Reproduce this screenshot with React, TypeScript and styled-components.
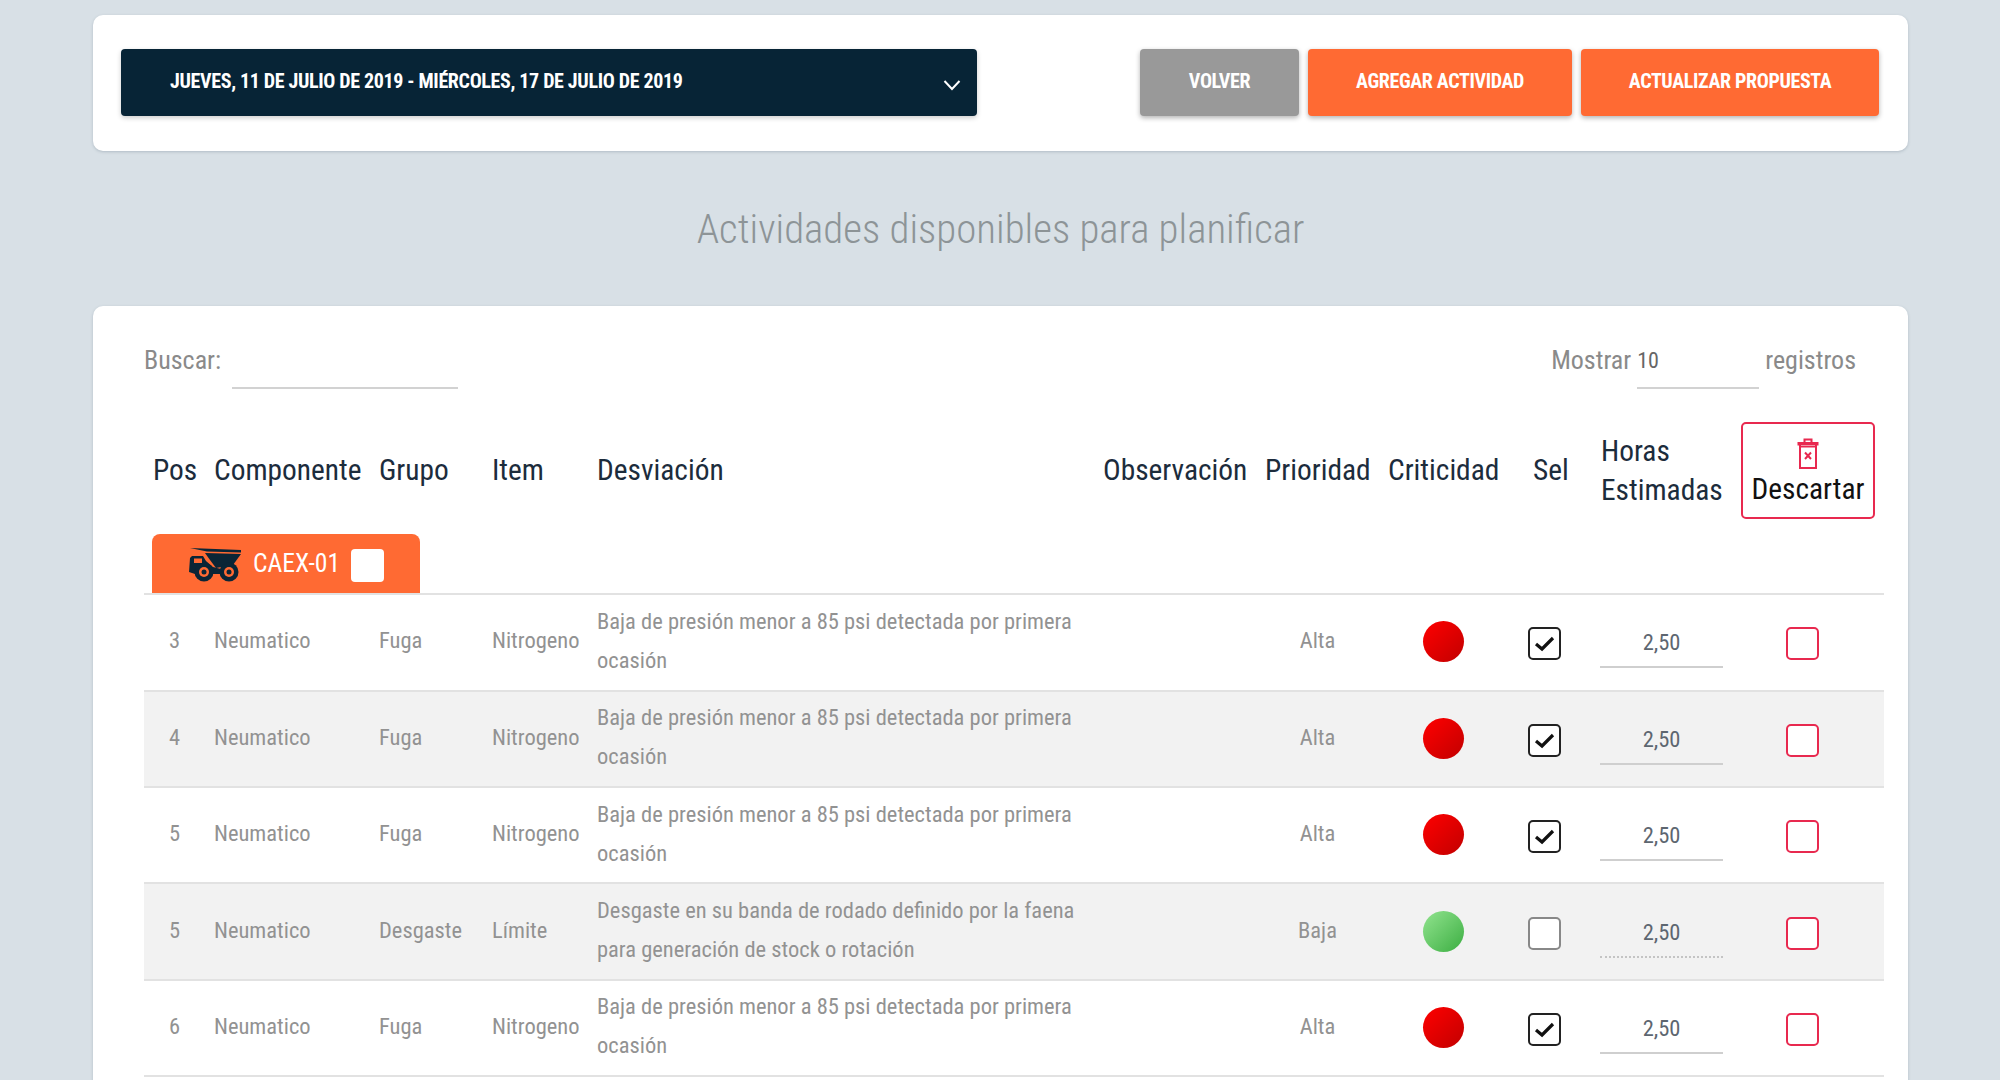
import React from 'react';
import styled, { createGlobalStyle } from 'styled-components';

const GlobalStyle = createGlobalStyle`
    html, body {
        margin: 0;
        height: 100%;
        overflow: hidden;
        background: #d8e0e6;
        font-family: "Roboto Condensed", "Liberation Sans Narrow", Roboto, sans-serif;
        font-stretch: condensed;
    }
    * { box-sizing: border-box; }
`;

const COLS = '61px 165px 113px 105px 506px 162px 123px 129px 84px 149px 143px';

const Page = styled.div`
    padding: 15px 92px 0 93px;
`;

const Card = styled.section`
    background: #fff;
    border-radius: 10px;
    box-shadow: 0 1px 3px rgba(60, 80, 100, 0.25);
`;

const TopBar = styled(Card)`
    height: 136px;
    padding: 34px 29px 0 28px;
    display: flex;
    gap: 9px;
`;

const DateSelect = styled.div`
    width: 856px;
    height: 67px;
    margin-right: 154px;
    padding: 0 15px 4px 49px;
    display: flex;
    align-items: center;
    justify-content: space-between;
    background: #072436;
    color: #fff;
    border-radius: 4px;
    font-size: 20px;
    font-weight: 700;
    letter-spacing: -0.34px;
    box-shadow: 0 2px 5px rgba(0, 0, 0, 0.2);
`;

const ChevronSvg = styled.svg`
    margin-top: 8px;
`;

const ActionButton = styled.button<{ $width: number; $gray?: boolean }>`
    width: ${p => p.$width}px;
    height: 67px;
    padding: 0 0 4px;
    border: 0;
    border-radius: 4px;
    background: ${p => (p.$gray ? '#999' : '#ff6a33')};
    color: #fff;
    font: inherit;
    font-size: 20px;
    font-weight: 700;
    letter-spacing: -0.36px;
    box-shadow: 0 2px 5px rgba(0, 0, 0, 0.3);
`;

const Title = styled.h2`
    height: 155px;
    margin: 0;
    display: flex;
    align-items: center;
    justify-content: center;
    color: #8d9497;
    font-size: 40.9px;
    font-weight: 300;
`;

const TableCard = styled(Card)`
    height: 900px;
    padding: 34px 24px 0 51px;
`;

const Filters = styled.div`
    height: 49px;
    padding-right: 28px;
    display: flex;
    align-items: flex-start;
    color: #8a8a8a;
    font-size: 26px;
`;

const FilterLabel = styled.span<{ $left?: number }>`
    margin-left: ${p => p.$left || 0}px;
    line-height: 40px;
`;

const UnderInput = styled.input<{ $width: number; $left: number }>`
    width: ${p => p.$width}px;
    height: 49px;
    margin-left: ${p => p.$left}px;
    padding: 0 0 7px;
    border: 0;
    border-bottom: 2px solid #d2d2d2;
    outline: none;
    background: none;
    color: #666;
    font: inherit;
    font-size: 22px;
`;

const Spacer = styled.div`
    flex: 1;
`;

const HeadRow = styled.div`
    height: 97px;
    margin-top: 33px;
    display: grid;
    grid-template-columns: ${COLS};
    align-items: center;
    color: #1c2c3c;
    font-size: 29.4px;
    line-height: 39px;
`;

const HeadCell = styled.div<{ $indent?: number }>`
    padding: 0 9px 0 ${p => p.$indent || 9}px;
`;

const DiscardBox = styled.div`
    width: 134px;
    height: 97px;
    padding-top: 14px;
    display: flex;
    flex-direction: column;
    align-items: center;
    border: 2px solid #e8294f;
    border-radius: 5px;
    color: #111;
`;

const GroupRow = styled.div`
    height: 76.2px;
    padding: 15px 0 0 8px;
    border-bottom: 2px solid #e2e2e2;
`;

const GroupTab = styled.div`
    width: 268px;
    height: 59px;
    padding: 14px 0 0 37px;
    display: flex;
    align-items: flex-start;
    gap: 10px;
    background: #ff6a33;
    border-radius: 8px 8px 0 0;
    color: #fff;
    font-size: 25.6px;
    line-height: 31px;
`;

const GroupCheck = styled.span`
    width: 33px;
    height: 33px;
    margin: 1px 0 0 1px;
    background: #fff;
    border-radius: 4px;
`;

const Row = styled.div<{ $alt: boolean }>`
    height: 96.4px;
    display: grid;
    grid-template-columns: ${COLS};
    align-items: center;
    background: ${p => (p.$alt ? '#f2f2f2' : '#fff')};
    border-bottom: 2px solid #e2e2e2;
    color: #929292;
    font-size: 22.5px;
    line-height: 39px;
`;

const Cell = styled.div<{ $center?: boolean }>`
    padding: 0 9px;
    margin-top: -3px;
    text-align: ${p => (p.$center ? 'center' : 'left')};
`;

const Dot = styled.span<{ $ok: boolean }>`
    display: block;
    width: 41px;
    height: 41px;
    margin: 2px auto 0;
    border-radius: 50%;
    background: ${p =>
        p.$ok
            ? 'linear-gradient(135deg, #92e48f, #3cae42)'
            : 'linear-gradient(135deg, #ff0000, #c20000)'};
`;

const Check = styled.span<{ $on?: boolean; $danger?: boolean; $left: number }>`
    display: flex;
    align-items: center;
    justify-content: center;
    width: 33px;
    height: 33px;
    margin: 3px 0 0 ${p => p.$left}px;
    background: #fff;
    border-radius: 5px;
    border: 2px solid ${p => (p.$danger ? '#e8294f' : p.$on ? '#222' : '#888')};
`;

const HoursInput = styled.input<{ $off: boolean }>`
    display: block;
    width: 123px;
    height: 44px;
    margin: 8px 0 0 8px;
    padding: 0 0 6px;
    border: 0;
    border-bottom: 2px ${p => (p.$off ? 'dotted #c4c4c4' : 'solid #cfcfcf')};
    background: none;
    outline: none;
    text-align: center;
    color: #5d6670;
    font: inherit;
    font-size: 22.5px;
`;

const TruckIcon = () => (
    <svg width="54" height="34" viewBox="0 0 54 34" fill="#0b2536">
        <path d="M1 0 L52 2 V4.5 L18 3.4 Z" />
        <path d="M16 5 L52 6 L44 17 L27 20 L21 12 Z" />
        <path d="M1 10 L3 8 H14 L17 13 L24 19 L32 21 V26 H6 L0 24 Z" />
        <rect x="5" y="10.5" width="8" height="4.5" fill="#ff6a33" />
        <circle cx="15" cy="24" r="9.5" />
        <circle cx="15" cy="24" r="5" fill="#ff6a33" />
        <circle cx="15" cy="24" r="2.5" />
        <circle cx="40" cy="24" r="9.5" />
        <circle cx="40" cy="24" r="5" fill="#ff6a33" />
        <circle cx="40" cy="24" r="2.5" />
    </svg>
);

const TrashIcon = () => (
    <svg width="22" height="32" viewBox="0 0 22 32" fill="none" stroke="#e8294f" strokeWidth="2">
        <path d="M1.5 7.5 V5 H20.5 V7.5" />
        <path d="M7.5 5 V1.5 H14.5 V5" />
        <path d="M3 6 H19 V30 H3 Z" />
        <path d="M3 8.5 H19" />
        <path d="M8 14.5 L14 21 M14 14.5 L8 21" />
    </svg>
);

const Chevron = () => (
    <ChevronSvg width="20" height="14" viewBox="0 0 20 14" fill="none" stroke="#fff" strokeWidth="2">
        <path d="M2.5 3 L10 11 L17.5 3" />
    </ChevronSvg>
);

const Tick = () => (
    <svg width="21" height="17" viewBox="0 0 21 17" fill="none" stroke="#111" strokeWidth="3.2">
        <path d="M2 9 L8 14 L19 3" />
    </svg>
);

interface Activity {
    pos: number;
    grupo: string;
    item: string;
    desviacion: string;
    prioridad: string;
    ok: boolean;
}

const FUGA = 'Baja de presión menor a 85 psi detectada por primera ocasión';
const DESGASTE = 'Desgaste en su banda de rodado definido por la faena para generación de stock o rotación';

const rows: Activity[] = [
    { pos: 3, grupo: 'Fuga', item: 'Nitrogeno', desviacion: FUGA, prioridad: 'Alta', ok: false },
    { pos: 4, grupo: 'Fuga', item: 'Nitrogeno', desviacion: FUGA, prioridad: 'Alta', ok: false },
    { pos: 5, grupo: 'Fuga', item: 'Nitrogeno', desviacion: FUGA, prioridad: 'Alta', ok: false },
    { pos: 5, grupo: 'Desgaste', item: 'Límite', desviacion: DESGASTE, prioridad: 'Baja', ok: true },
    { pos: 6, grupo: 'Fuga', item: 'Nitrogeno', desviacion: FUGA, prioridad: 'Alta', ok: false },
];

export default function App()
{
    return (
        <Page>
            <GlobalStyle />
            <TopBar>
                <DateSelect>
                    JUEVES, 11 DE JULIO DE 2019 - MIÉRCOLES, 17 DE JULIO DE 2019
                    <Chevron />
                </DateSelect>
                <ActionButton $width={159} $gray>VOLVER</ActionButton>
                <ActionButton $width={264}>AGREGAR ACTIVIDAD</ActionButton>
                <ActionButton $width={298}>ACTUALIZAR PROPUESTA</ActionButton>
            </TopBar>

            <Title>Actividades disponibles para planificar</Title>

            <TableCard>
                <Filters>
                    <FilterLabel>Buscar:</FilterLabel>
                    <UnderInput $width={226} $left={11} />
                    <Spacer />
                    <FilterLabel>Mostrar</FilterLabel>
                    <UnderInput $width={122} $left={6} defaultValue="10" />
                    <FilterLabel $left={6}>registros</FilterLabel>
                </Filters>

                <HeadRow>
                    <HeadCell>Pos</HeadCell>
                    <HeadCell>Componente</HeadCell>
                    <HeadCell>Grupo</HeadCell>
                    <HeadCell>Item</HeadCell>
                    <HeadCell>Desviación</HeadCell>
                    <HeadCell>Observación</HeadCell>
                    <HeadCell>Prioridad</HeadCell>
                    <HeadCell>Criticidad</HeadCell>
                    <HeadCell $indent={25}>Sel</HeadCell>
                    <HeadCell>Horas Estimadas</HeadCell>
                    <DiscardBox>
                        <TrashIcon />
                        Descartar
                    </DiscardBox>
                </HeadRow>

                <GroupRow>
                    <GroupTab>
                        <TruckIcon />
                        CAEX-01
                        <GroupCheck />
                    </GroupTab>
                </GroupRow>

                {rows.map((r, i) => (
                    <Row key={i} $alt={i % 2 === 1}>
                        <Cell $center>{r.pos}</Cell>
                        <Cell>Neumatico</Cell>
                        <Cell>{r.grupo}</Cell>
                        <Cell>{r.item}</Cell>
                        <Cell>{r.desviacion}</Cell>
                        <Cell />
                        <Cell $center>{r.prioridad}</Cell>
                        <Cell><Dot $ok={r.ok} /></Cell>
                        <Check $on={!r.ok} $left={20}>{!r.ok && <Tick />}</Check>
                        <HoursInput $off={r.ok} readOnly value="2,50" />
                        <Check $danger $left={45} />
                    </Row>
                ))}
            </TableCard>
        </Page>
    );
}
